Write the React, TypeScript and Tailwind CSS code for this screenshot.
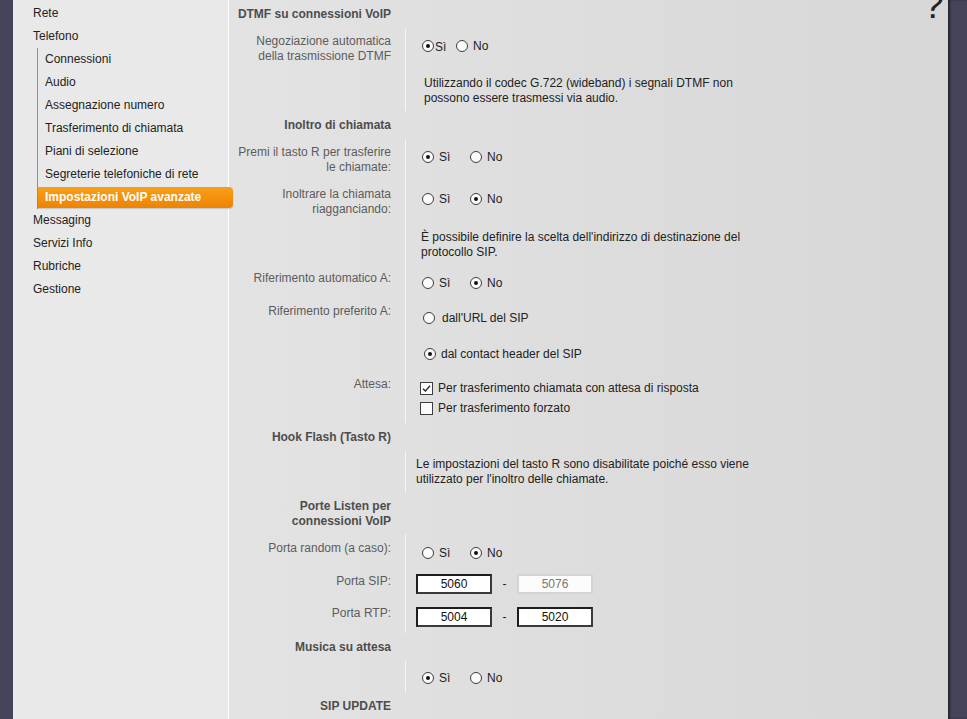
import React from 'react';

const mainMenuTop = ['Rete', 'Telefono'];
const subMenu = [
  'Connessioni',
  'Audio',
  'Assegnazione numero',
  'Trasferimento di chiamata',
  'Piani di selezione',
  'Segreterie telefoniche di rete',
];
const mainMenuBottom = ['Messaging', 'Servizi Info', 'Rubriche', 'Gestione'];

const Radio: React.FC<{ checked?: boolean; className?: string }> = ({ checked, className = '' }) => (
  <span
    className={`inline-flex h-[12px] w-[12px] shrink-0 items-center justify-center rounded-full border border-[#3d3d3d] bg-[#fbfbfb] ${className}`}
  >
    {checked && <span className="h-[4px] w-[4px] rounded-full bg-[#111]" />}
  </span>
);

const Checkbox: React.FC<{ checked?: boolean }> = ({ checked }) => (
  <span className="ml-[4px] inline-flex h-[13px] w-[13px] shrink-0 items-center justify-center border border-[#3d3d3d] bg-[#fbfbfb]">
    {checked && (
      <svg viewBox="0 0 12 12" className="h-[11px] w-[11px]">
        <path d="M2.2 6.2 L4.8 8.8 L9.8 3" fill="none" stroke="#222" strokeWidth="1.4" />
      </svg>
    )}
  </span>
);

const YesNo: React.FC<{ yes: boolean; compact?: boolean }> = ({ yes, compact }) =>
  compact ? (
    <div className="flex h-[15px] items-center">
      <Radio checked={yes} className="ml-[6px]" />
      <span className="ml-[1px] w-[16px] pt-[2px]">Sì</span>
      <Radio checked={!yes} className="ml-[5px]" />
      <span className="ml-[5px]">No</span>
    </div>
  ) : (
    <div className="flex h-[15px] items-center">
      <Radio checked={yes} className="ml-[6px]" />
      <span className="ml-[5px] w-[26px]">Sì</span>
      <Radio checked={!yes} className="ml-[5px]" />
      <span className="ml-[5px]">No</span>
    </div>
  );

const Heading: React.FC<{ h: string; pt: string; children: React.ReactNode }> = ({ h, pt, children }) => (
  <div className={`flex ${h}`}>
    <div className={`w-[176px] shrink-0 pl-[8px] pr-[14px] text-right font-bold text-[#4d4d4d] ${pt}`}>
      {children}
    </div>
  </div>
);

const Row: React.FC<{
  h: string;
  lpt?: string;
  vpt: string;
  label?: React.ReactNode;
  children: React.ReactNode;
}> = ({ h, lpt = 'pt-[5.5px]', vpt, label, children }) => (
  <div className={`flex ${h}`}>
    <div className={`w-[176px] shrink-0 pl-[8px] pr-[14px] text-right text-[#5c5c5c] ${lpt}`}>{label}</div>
    <div className={`flex-1 border-l border-[#f5f5f5] pl-[10px] text-[#222] ${vpt}`}>{children}</div>
  </div>
);

const PortBox: React.FC<{ value: string; disabled?: boolean }> = ({ value, disabled }) =>
  disabled ? (
    <input
      readOnly
      value={value}
      className="h-[20px] w-[76px] border-2 border-[#d4d4d4] bg-[#fcfcfc] text-center text-[12px] text-[#777] outline-none"
    />
  ) : (
    <input
      readOnly
      value={value}
      className="h-[20px] w-[76px] border-2 border-t-[#1e1e1e] border-l-[#1e1e1e] border-r-[#3a3a3a] border-b-[#3a3a3a] bg-white text-center text-[12px] text-[#111] outline-none"
    />
  );

export default function App() {
  return (
    <div className="flex h-[719px] w-full overflow-hidden bg-[#45435a] font-['Liberation_Sans',Arial,sans-serif] text-[12px] leading-[15px]">
      <div className="w-[13px] shrink-0 bg-[#45435a]" />

      {/* Sidebar */}
      <aside className="relative z-10 w-[216px] shrink-0 border-r border-white bg-[#e9e9e9] pt-[2px] text-[#222]">
        <ul>
          {mainMenuTop.map((item) => (
            <li key={item} className="h-[23px] pl-[20px] leading-[23px]">
              {item}
            </li>
          ))}
          <li>
            <ul className="ml-[24px] border-l border-[#8f8f8f]">
              {subMenu.map((item) => (
                <li key={item} className="h-[23px] pl-[7px] leading-[23px]">
                  {item}
                </li>
              ))}
              <li className="h-[23px] py-[1px]">
                <div className="-mr-[5px] h-[21px] rounded-r-[4px] bg-linear-to-b from-[#f7a01a] to-[#ee8300] pl-[7px] font-bold leading-[21px] text-white shadow-[0_1px_1px_rgba(0,0,0,0.15)]">
                  Impostazioni VoIP avanzate
                </div>
              </li>
            </ul>
          </li>
          {mainMenuBottom.map((item) => (
            <li key={item} className="h-[23px] pl-[20px] leading-[23px]">
              {item}
            </li>
          ))}
        </ul>
      </aside>

      {/* Content */}
      <main className="relative flex-1 bg-linear-to-r from-[#e3e3e3] to-[#d7d7d7] pt-[1px]">
        <span className="absolute right-[4px] top-[-14px] text-[38px] leading-[38px] text-[#222]">?</span>

        <Heading h="h-[27px]" pt="pt-[6px]">DTMF su connessioni VoIP</Heading>
        <Row
          h="h-[40px]"
          vpt="pt-[10.5px]"
          label={
            <>
              Negoziazione automatica
              <br />
              della trasmissione DTMF
            </>
          }
        >
          <YesNo yes compact />
        </Row>
        <Row h="h-[43px]" vpt="pt-[7.5px]">
          <div className="ml-[8px] whitespace-nowrap">
            Utilizzando il codec G.722 (wideband) i segnali DTMF non
            <br />
            possono essere trasmessi via audio.
          </div>
        </Row>

        <Heading h="h-[28px]" pt="pt-[6.5px]">Inoltro di chiamata</Heading>
        <Row
          h="h-[42px]"
          vpt="pt-[10.5px]"
          label={
            <>
              Premi il tasto R per trasferire
              <br />
              le chiamate:
            </>
          }
        >
          <YesNo yes />
        </Row>
        <Row
          h="h-[42px]"
          vpt="pt-[10.5px]"
          label={
            <>
              Inoltrare la chiamata
              <br />
              riagganciando:
            </>
          }
        >
          <YesNo yes={false} />
        </Row>
        <Row h="h-[42px]" vpt="pt-[6.5px]">
          <div className="ml-[5px] whitespace-nowrap">
            È possibile definire la scelta dell'indirizzo di destinazione del
            <br />
            protocollo SIP.
          </div>
        </Row>
        <Row h="h-[33px]" vpt="pt-[10.5px]" label="Riferimento automatico A:">
          <YesNo yes={false} />
        </Row>
        <Row h="h-[38px]" vpt="pt-[12.5px]" label="Riferimento preferito A:">
          <div className="flex h-[15px] items-center">
            <Radio className="ml-[7px]" />
            <span className="ml-[7px]">dall'URL del SIP</span>
          </div>
        </Row>
        <Row h="h-[35px]" vpt="pt-[10.5px]">
          <div className="flex h-[15px] items-center">
            <Radio checked className="ml-[8px]" />
            <span className="ml-[5px]">dal contact header del SIP</span>
          </div>
        </Row>
        <Row h="h-[52px]" vpt="pt-[7px]" label="Attesa:">
          <div className="flex h-[20px] items-center">
            <Checkbox checked />
            <span className="ml-[5px]">Per trasferimento chiamata con attesa di risposta</span>
          </div>
          <div className="flex h-[20px] items-center">
            <Checkbox />
            <span className="ml-[5px]">Per trasferimento forzato</span>
          </div>
        </Row>

        <Heading h="h-[28px]" pt="pt-[6.5px]">Hook Flash (Tasto R)</Heading>
        <Row h="h-[42px]" vpt="pt-[5.5px]">
          <div className="whitespace-nowrap">
            Le impostazioni del tasto R sono disabilitate poiché esso viene
            <br />
            utilizzato per l'inoltro delle chiamate.
          </div>
        </Row>

        <Heading h="h-[41px]" pt="pt-[5.5px]">
          Porte Listen per
          <br />
          connessioni VoIP
        </Heading>
        <Row h="h-[33px]" lpt="pt-[6.5px]" vpt="pt-[11.5px]" label="Porta random (a caso):">
          <YesNo yes={false} />
        </Row>
        <Row h="h-[33px]" lpt="pt-[6.5px]" vpt="pt-[7px]" label="Porta SIP:">
          <div className="flex items-center">
            <PortBox value="5060" />
            <span className="w-[25px] text-center">-</span>
            <PortBox value="5076" disabled />
          </div>
        </Row>
        <Row h="h-[33px]" vpt="pt-[7px]" label="Porta RTP:">
          <div className="flex items-center">
            <PortBox value="5004" />
            <span className="w-[25px] text-center">-</span>
            <PortBox value="5020" />
          </div>
        </Row>

        <Heading h="h-[28px]" pt="pt-[6.5px]">Musica su attesa</Heading>
        <Row h="h-[32px]" vpt="pt-[9.5px]">
          <YesNo yes />
        </Row>

        <Heading h="h-[28px]" pt="pt-[5.5px]">SIP UPDATE</Heading>
      </main>

      <div className="w-[19px] shrink-0 bg-[#45435a] shadow-[inset_2px_0_2px_rgba(0,0,0,0.45)]" />
    </div>
  );
}
